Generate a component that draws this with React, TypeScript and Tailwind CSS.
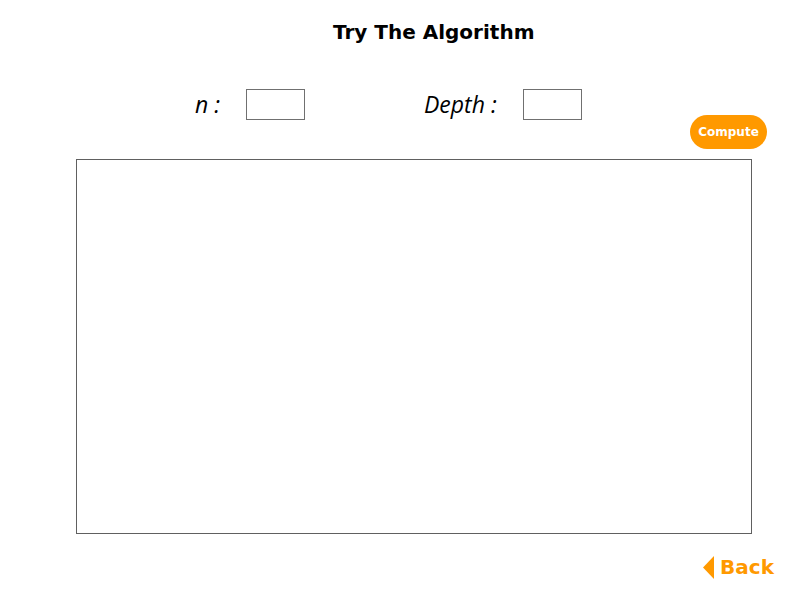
export default function App() {
  return (
    <div className="w-[790px] h-[594px] bg-white flex flex-col overflow-hidden">
      <h1 className="ml-[333px] mt-[19px] h-[26px] text-[20px] leading-[26px] font-bold text-black font-['DejaVu_Sans',sans-serif] whitespace-nowrap">
        Try The Algorithm
      </h1>

      <div className="flex items-center mt-[44px] h-[30px]">
        <span className="ml-[195px] w-[51px] text-[23px] italic text-black font-['Open_Sans',sans-serif]">
          n :
        </span>
        <div className="w-[59px] h-[31px] border border-[#707070]" />
        <span className="ml-[119px] w-[99px] text-[23px] italic text-black font-['Open_Sans',sans-serif] whitespace-nowrap">
          Depth :
        </span>
        <div className="w-[59px] h-[31px] border border-[#707070]" />
      </div>

      <div className="flex justify-end pr-[23px] -mt-[4px]">
        <button className="w-[77px] h-[34px] rounded-full bg-[#ff9900] text-white text-[12px] font-bold font-['DejaVu_Sans',sans-serif]">
          Compute
        </button>
      </div>

      <div className="ml-[76px] mt-[10px] w-[676px] h-[375px] border border-[#606060]" />

      <div className="flex justify-end items-center pr-[16px] mt-[18px] gap-[6px]">
        <svg width="11" height="23" viewBox="0 0 11 23">
          <polygon points="11,0 11,23 0,11.5" fill="#ff9900" />
        </svg>
        <span className="text-[20px] font-bold text-[#ff9900] font-['DejaVu_Sans',sans-serif]">
          Back
        </span>
      </div>
    </div>
  );
}
